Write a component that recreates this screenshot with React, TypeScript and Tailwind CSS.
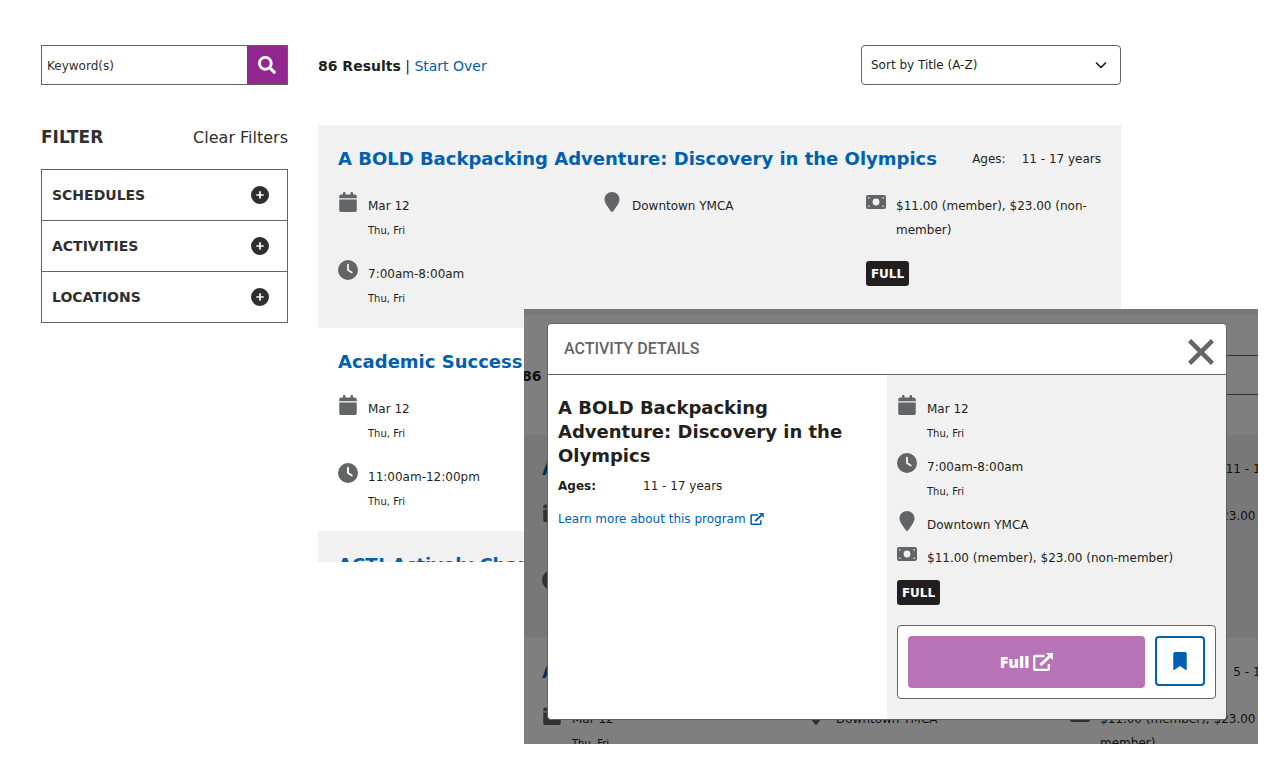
import { useId } from "react";
import type { ReactNode } from "react";
import { FaSearch } from "react-icons/fa";
import { FaBookmark, FaCalendar, FaCirclePlus, FaClock, FaLocationPin } from "react-icons/fa6";

type Program = {
  title: string;
  ages: string;
  date: string;
  time: string;
  days: string;
  place: string;
  price: string;
  full: boolean;
};

const programs: Program[] = [
  {
    title: "A BOLD Backpacking Adventure: Discovery in the Olympics",
    ages: "11 - 17 years",
    date: "Mar 12",
    time: "7:00am-8:00am",
    days: "Thu, Fri",
    place: "Downtown YMCA",
    price: "$11.00 (member), $23.00 (non-member)",
    full: true,
  },
  {
    title: "Academic Success",
    ages: "5 - 12 years",
    date: "Mar 12",
    time: "11:00am-12:00pm",
    days: "Thu, Fri",
    place: "Downtown YMCA",
    price: "$11.00 (member), $23.00 (non-member)",
    full: false,
  },
  {
    title: "ACT! Actively Changing Together",
    ages: "8 - 14 years",
    date: "Mar 12",
    time: "4:00pm-5:00pm",
    days: "Thu, Fri",
    place: "Downtown YMCA",
    price: "$11.00 (member), $23.00 (non-member)",
    full: false,
  },
];

function Detail({ icon, children, note }: { icon: ReactNode; children: ReactNode; note?: string }) {
  return (
    <div className="flex gap-2.5">
      <span className="flex h-5 w-5 shrink-0 items-center justify-center text-[#636466]">{icon}</span>
      <div className="pt-0.5 text-xs leading-6">
        <p>{children}</p>
        {note && <p className="text-[10px] leading-[25px]">{note}</p>}
      </div>
    </div>
  );
}

function MoneyIcon() {
  return (
    <svg viewBox="0 0 20 14" className="h-3.5 w-5" fill="currentColor" aria-hidden="true">
      <path
        fillRule="evenodd"
        d="M2 0h16a2 2 0 0 1 2 2v10a2 2 0 0 1-2 2H2a2 2 0 0 1-2-2V2a2 2 0 0 1 2-2ZM10 3.600a3.400 3.400 0 1 0 0 6.800a3.400 3.400 0 0 0 0-6.800ZM2.200 2.200v1.600a1.600 1.600 0 0 0 1.600-1.600ZM17.800 2.200h-1.600a1.600 1.600 0 0 0 1.600 1.600ZM2.200 11.800h1.600a1.600 1.600 0 0 0-1.600-1.600ZM17.800 11.800v-1.600a1.600 1.600 0 0 0-1.600 1.600Z"
      />
    </svg>
  );
}

const calendar = <FaCalendar className="h-5 w-[18px]" />;
const clock = <FaClock className="h-5 w-5" />;
const pin = <FaLocationPin className="h-5 w-4" />;
const money = <MoneyIcon />;

function FullBadge() {
  return (
    <span className="flex h-[25px] w-[43px] items-center justify-center rounded-[3px] bg-[#231f20] text-xs font-bold text-white">
      FULL
    </span>
  );
}

function ExternalIcon({ className }: { className: string }) {
  return (
    <svg viewBox="0 0 20 18" className={className} fill="none" stroke="currentColor" aria-hidden="true">
      <path d="M11.500 3H1.900Q1.200 3 1.200 3.700v12.400q0 .7.7.7h13.200q.7 0 .7-.7V11" strokeWidth="2.300" />
      <path d="M7.300 12.200 16.500 3.500" strokeWidth="3" />
      <path d="M13 0h7v6.800z" fill="currentColor" stroke="currentColor" strokeWidth="0.500" />
    </svg>
  );
}

function ProgramCard({ program }: { program: Program }) {
  return (
    <article className="px-5 pt-5 pb-[17px] odd:bg-[#f1f1f1]">
      <div className="flex items-center justify-between">
        <h2 className="text-lg leading-[27px] font-bold whitespace-nowrap text-[#0060af]">{program.title}</h2>
        <p className="flex gap-4 text-xs whitespace-nowrap">
          <span>Ages:</span>
          <span>{program.ages}</span>
        </p>
      </div>
      <div className="mt-5 grid grid-cols-3 gap-[29px]">
        <div className="flex flex-col gap-[17px]">
          <Detail icon={calendar} note={program.days}>{program.date}</Detail>
          <Detail icon={clock} note={program.days}>{program.time}</Detail>
        </div>
        <Detail icon={pin}>{program.place}</Detail>
        <div className="flex flex-col gap-[19px]">
          <Detail icon={money}>{program.price}</Detail>
          {program.full && <FullBadge />}
        </div>
      </div>
    </article>
  );
}

function Results() {
  const sortId = useId();
  return (
    <section>
      <div className="mb-10 flex h-10 items-center justify-between">
        <p className="pt-0.5 text-sm">
          <strong>86 Results</strong> | <a href="#start" className="text-[#0060af]">Start Over</a>
        </p>
        <div className="relative h-10 w-[260px]">
          <label htmlFor={sortId} className="sr-only">Sort results</label>
          <select
            id={sortId}
            className="h-full w-full appearance-none rounded border border-[#636466] bg-white pr-8 pl-[9px] text-xs"
          >
            <option>Sort by Title (A-Z)</option>
            <option>Sort by Title (Z-A)</option>
          </select>
          <svg viewBox="0 0 12 8" className="pointer-events-none absolute top-4 right-3.5 h-2 w-3" fill="none" stroke="currentColor" strokeWidth="1.700" strokeLinecap="round" strokeLinejoin="round" aria-hidden="true">
            <path d="M1.500 2 6 6.500 10.500 2" />
          </svg>
        </div>
      </div>
      {/* Odd cards are shaded, so the list has its own parent */}
      <div>
        {programs.map((program) => (
          <ProgramCard key={program.title} program={program} />
        ))}
      </div>
    </section>
  );
}

function Sidebar() {
  return (
    <aside className="w-[247px] shrink-0 text-[#2f2f2f]">
      <form className="flex h-10 border border-[#636466]">
        <label htmlFor="keywords" className="sr-only">Keywords</label>
        <input
          id="keywords"
          placeholder="Keyword(s)"
          className="min-w-0 flex-1 px-[5px] pt-0.5 text-xs outline-none placeholder:text-[#2f2f2f]"
        />
        <button type="button" aria-label="Search" className="flex w-10 items-center justify-center bg-[#92278f] text-white">
          <FaSearch className="h-[18px] w-[18px]" />
        </button>
      </form>
      <div className="mt-10 flex h-6 items-center justify-between pt-0.5">
        <h2 className="text-[17px] font-bold">FILTER</h2>
        <button type="button">Clear Filters</button>
      </div>
      <ul className="mt-5 divide-y divide-[#636466] border border-[#636466]">
        {["SCHEDULES", "ACTIVITIES", "LOCATIONS"].map((name) => (
          <li key={name}>
            <button
              type="button"
              className="flex h-[50px] w-full items-center justify-between pr-[18px] pl-2.5 text-sm font-bold"
            >
              {name}
              <FaCirclePlus className="h-[18px] w-[18px]" />
            </button>
          </li>
        ))}
      </ul>
    </aside>
  );
}

function ActivityDialog({ program }: { program: Program }) {
  return (
    <div
      role="dialog"
      aria-labelledby="dialog-title"
      className="absolute top-3.5 right-[31px] bottom-6 left-[23px] flex flex-col overflow-hidden rounded border border-[#636466] bg-white"
    >
      <header className="flex h-[51px] shrink-0 items-center justify-between border-b border-[#636466] pr-3 pl-4 text-[#636466]">
        <h2 id="dialog-title" className="font-[Roboto,sans-serif] text-base font-medium">ACTIVITY DETAILS</h2>
        <button type="button" aria-label="Close" className="mt-1.5">
          <svg viewBox="0 0 26 26" className="h-[26px] w-[26px]" stroke="currentColor" strokeWidth="4.500" aria-hidden="true">
            <path d="M1.600 1.600 24.400 24.400M24.400 1.600 1.600 24.400" />
          </svg>
        </button>
      </header>
      <div className="grid flex-1 grid-cols-2">
        <div className="px-2.5 pt-[21px]">
          <h3 className="text-lg leading-6 font-bold">{program.title}</h3>
          <p className="mt-1.5 flex text-xs leading-6">
            <strong className="w-[85px]">Ages:</strong>
            <span>{program.ages}</span>
          </p>
          <a href="#program" className="mt-[9px] flex items-center gap-1 text-xs leading-6 text-[#0060af]">
            Learn more about this program
            <ExternalIcon className="h-3 w-3.5" />
          </a>
        </div>
        <div className="flex flex-col bg-[#f1f1f1] px-2.5 pt-5">
          <div className="flex flex-col gap-[7px]">
            <Detail icon={calendar} note={program.days}>{program.date}</Detail>
            <Detail icon={clock} note={program.days}>{program.time}</Detail>
            <Detail icon={pin}>{program.place}</Detail>
            <Detail icon={money}>{program.price}</Detail>
          </div>
          <div className="mt-2.5">
            <FullBadge />
          </div>
          <div className="mt-5 flex items-start gap-2.5 rounded border border-[#636466] bg-white p-2.5">
            <button
              type="button"
              className="flex h-[52px] flex-1 items-center justify-center gap-1 rounded bg-[#b872b6] font-['Noto_Sans',sans-serif] text-base font-black text-white"
            >
              Full
              <ExternalIcon className="h-[18px] w-5" />
            </button>
            <button
              type="button"
              aria-label="Bookmark"
              className="flex h-[50px] w-[50px] items-center justify-center rounded border-2 border-[#0060af] text-[#0060af]"
            >
              <FaBookmark className="h-[18px] w-3.5" />
            </button>
          </div>
        </div>
      </div>
    </div>
  );
}

export default function App() {
  return (
    <main className="relative min-h-screen bg-white font-['DejaVu_Sans',sans-serif] text-[#231f20]">
      <div className="flex h-[562px] gap-[30px] overflow-hidden pt-[45px] pr-[157px] pl-[41px]">
        <Sidebar />
        <div className="min-w-0 flex-1">
          <Results />
        </div>
      </div>
      <section className="absolute top-[309px] right-5 left-[524px] h-[435px] overflow-hidden bg-white">
        <div inert aria-hidden="true">
          <div className="h-1.5 bg-[#f1f1f1]" />
          <div className="-ml-0.5 w-[803px] pt-10">
            <Results />
          </div>
        </div>
        <div className="absolute inset-0 bg-black/50" />
        <ActivityDialog program={programs[0]} />
      </section>
    </main>
  );
}
